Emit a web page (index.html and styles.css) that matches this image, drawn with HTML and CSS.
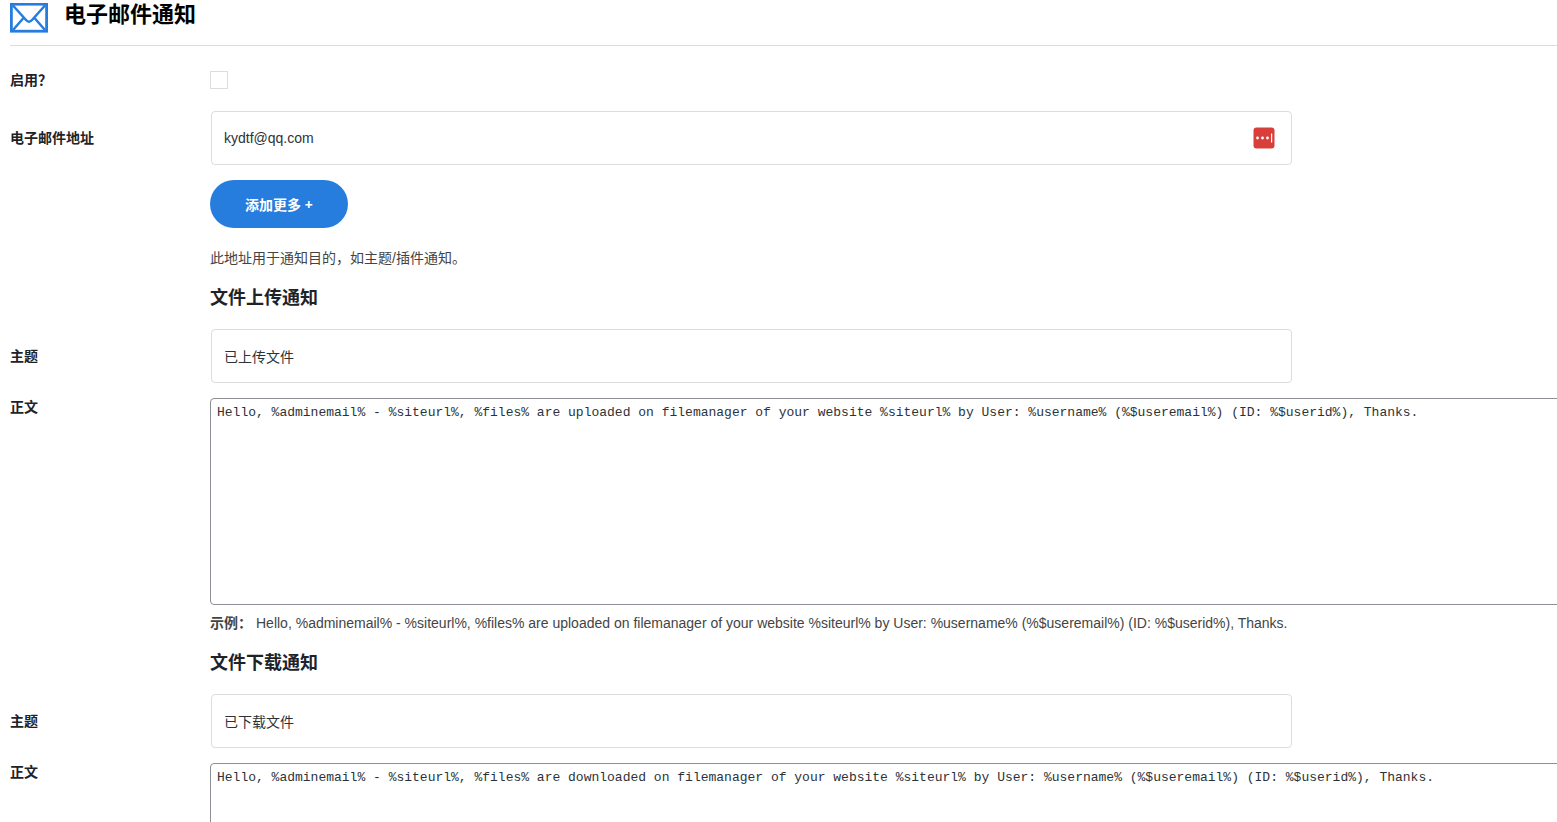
FILE: index.html
```html
<!DOCTYPE html>
<html lang="zh-CN">
<head>
    <meta charset="UTF-8">
    <meta name="viewport" content="width=device-width, initial-scale=1.0">
    <title>电子邮件通知</title>
    <link rel="stylesheet" href="styles.css">
</head>
<body>

    <div class="page">
        <!-- Heading -->
        <div class="page-header">
            <svg class="mail-icon" viewBox="0 0 38 30" fill="none" stroke="#267ddd" stroke-width="2.5" aria-hidden="true">
                <rect x="1.4" y="1.2" width="35.2" height="27" stroke-width="2.8"/>
                <path d="M3 2.5l13 14.5q3 3.4 6 0L35 2.5M3 27l10.5-12M35 27L24.5 15"/>
            </svg>
            <h1>电子邮件通知</h1>
        </div>

        <form>
            <div class="row">
                <label class="row-label enable-label" for="enable">启用？</label>
                <div class="field">
                    <input type="checkbox" id="enable">
                </div>
            </div>

            <div class="row">
                <label class="row-label" for="email">电子邮件地址</label>
                <div class="field">
                    <div class="input-wrap">
                        <input type="text" id="email" value="kydtf@qq.com">
                        <svg class="pass-icon" viewBox="0 0 22 22" aria-hidden="true">
                            <rect x="0.5" y="0.5" width="21" height="21" rx="3" fill="#d93f3a"/>
                            <g fill="#fff">
                                <circle cx="4.5" cy="11" r="1.4"/>
                                <circle cx="9.5" cy="11" r="1.4"/>
                                <circle cx="14.5" cy="11" r="1.4"/>
                                <rect x="18" y="6.5" width="1.2" height="9"/>
                            </g>
                        </svg>
                    </div>
                    <button type="button" class="add-button">添加更多 +</button>
                    <p class="description">此地址用于通知目的，如主题/插件通知。</p>
                </div>
            </div>

            <!-- Upload notification -->
            <h2>文件上传通知</h2>
            <div class="row">
                <label class="row-label" for="upload-subject">主题</label>
                <div class="field">
                    <div class="input-wrap">
                        <input type="text" id="upload-subject" value="已上传文件">
                    </div>
                </div>
            </div>
            <div class="row">
                <label class="row-label message-label" for="upload-message">正文</label>
                <div class="field">
                    <textarea id="upload-message" rows="10" spellcheck="false">Hello, %adminemail% - %siteurl%, %files% are uploaded on filemanager of your website %siteurl% by User: %username% (%$useremail%) (ID: %$userid%), Thanks.</textarea>
                    <p class="example"><strong>示例：</strong>Hello, %adminemail% - %siteurl%, %files% are uploaded on filemanager of your website %siteurl% by User: %username% (%$useremail%) (ID: %$userid%), Thanks.</p>
                </div>
            </div>

            <!-- Download notification -->
            <h2>文件下载通知</h2>
            <div class="row">
                <label class="row-label" for="download-subject">主题</label>
                <div class="field">
                    <div class="input-wrap">
                        <input type="text" id="download-subject" value="已下载文件">
                    </div>
                </div>
            </div>
            <div class="row">
                <label class="row-label message-label" for="download-message">正文</label>
                <div class="field">
                    <textarea id="download-message" rows="10" spellcheck="false">Hello, %adminemail% - %siteurl%, %files% are downloaded on filemanager of your website %siteurl% by User: %username% (%$useremail%) (ID: %$userid%), Thanks.</textarea>
                </div>
            </div>
        </form>
    </div>

</body>
</html>
```
FILE: styles.css
```css
* {
    box-sizing: border-box;
}

body {
    margin: 0;
    background: #fff;
    color: #1d2327;
    font-family: "Liberation Sans", "Noto Sans CJK SC", sans-serif;
    font-size: 14px;
    line-height: 20px;
}

.page {
    height: 100vh;
    padding-left: 10px;
    overflow-x: hidden;
    overflow-y: auto;
    scrollbar-width: none;
}

.page-header {
    display: flex;
    gap: 16px;
    height: 46px;
    border-bottom: 1px solid #ddd;
}

.mail-icon {
    width: 38px;
    height: 30px;
    margin-top: 3px;
}

h1 {
    margin: 0;
    color: #000;
    font-size: 22px;
    line-height: 30px;
}

form {
    margin-right: -4px;
    padding-top: 25px;
}

.row {
    display: grid;
    grid-template-columns: 200px 1fr;
    margin-bottom: 15px;
}

.row-label {
    padding-top: 18px;
    font-family: "Noto Sans CJK SC", sans-serif;
    font-weight: bold;
    line-height: 16px;
}

.enable-label,
.message-label {
    padding-top: 0;
}

.field {
    min-width: 0;
}

input[type="checkbox"] {
    display: block;
    appearance: none;
    width: 18px;
    height: 18px;
    margin: 0 0 7px;
    border: 1px solid #ddd;
    background: #fff;
}

input[type="checkbox"]:checked {
    background: #267ddd;
}

.input-wrap {
    position: relative;
    width: 80%;
    margin-left: 1px;
}

input[type="text"] {
    display: block;
    width: 100%;
    height: 54px;
    padding: 0 12px;
    border: 1px solid #ddd;
    border-radius: 4px;
    background: #fff;
    color: #2c3338;
    font: inherit;
}

.pass-icon {
    position: absolute;
    top: 16px;
    right: 17px;
    width: 22px;
    height: 22px;
}

.add-button {
    display: block;
    height: 48px;
    margin-top: 15px;
    padding: 0 35px;
    border: none;
    border-radius: 24px;
    background: #267ddd;
    color: #fff;
    font-family: "Open Sans", "Noto Sans CJK SC", sans-serif;
    font-size: 14px;
    font-weight: bold;
    cursor: pointer;
}

.add-button:hover {
    background: #1e69bd;
}

.description {
    margin: 20px 0 0;
    color: #444;
}

h2 {
    margin: 0 0 18px 200px;
    padding-top: 2px;
    font-size: 18px;
    line-height: 26px;
}

textarea {
    display: block;
    width: 100%;
    height: 207px;
    padding: 4px 6px;
    border: 1px solid #8c8f94;
    border-radius: 4px;
    background: #fff;
    color: #2c3338;
    font-family: "Liberation Mono", monospace;
    font-size: 13px;
    line-height: 20px;
    resize: none;
}

.example {
    margin: 8px 0 0;
    color: #444;
}

.example strong {
    margin-right: 4px;
}
```
